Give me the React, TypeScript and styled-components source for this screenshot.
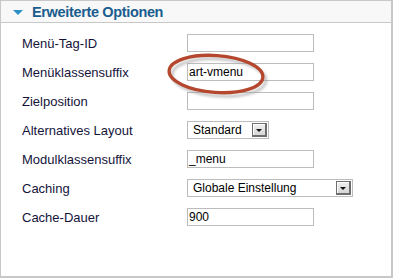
import React from "react";
import styled, { createGlobalStyle } from "styled-components";

const GlobalStyle = createGlobalStyle`
  html, body {
    margin: 0;
    padding: 0;
    background: #ffffff;
  }
  body {
    font-family: "Liberation Sans", Arial, sans-serif;
  }
`;

const fields: any[] = [
  { label: "Menü-Tag-ID", kind: "text", value: "" },
  { label: "Menüklassensuffix", kind: "text", value: "art-vmenu" },
  { label: "Zielposition", kind: "text", value: "" },
  { label: "Alternatives Layout", kind: "select", value: "Standard", width: 82 },
  { label: "Modulklassensuffix", kind: "text", value: "_menu" },
  { label: "Caching", kind: "select", value: "Globale Einstellung", width: 166 },
  { label: "Cache-Dauer", kind: "text", value: "900" },
];

const Panel = styled.section`
  position: relative;
  box-sizing: border-box;
  width: 393px;
  height: 278px;
  border: 1px solid #c8c8c8;
  border-right-width: 2px;
  border-bottom-width: 2px;
  background: #ffffff;
`;

const Header = styled.div`
  display: flex;
  align-items: center;
  gap: 9px;
  height: 21px;
  padding-left: 12px;
  background: #f8f8f8;
  border-bottom: 1px solid #c8c8c8;
`;

const Arrow = styled.span`
  width: 0;
  height: 0;
  border-left: 5px solid transparent;
  border-right: 5px solid transparent;
  border-top: 5px solid #2b8fc6;
  margin-top: 1px;
`;

const Title = styled.h3`
  margin: 0;
  font-size: 14.5px;
  font-weight: bold;
  color: #1b5d8f;
  letter-spacing: -0.35px;
`;

const Form = styled.div`
  display: grid;
  grid-template-columns: 165px auto;
  grid-auto-rows: 18px;
  row-gap: 11px;
  align-items: center;
  padding: 11px 0 0 21px;
`;

const Label = styled.label`
  font-size: 13px;
  color: #14143a;
  white-space: nowrap;
`;

const TextBox = styled.div`
  box-sizing: border-box;
  width: 127px;
  height: 18px;
  border: 1px solid #bcbcbc;
  padding: 0 1px;
  font-size: 12px;
  line-height: 16px;
  color: #000;
  background: #fff;
`;

const SelectBox = styled.div<{ $w: number }>`
  box-sizing: border-box;
  display: flex;
  align-items: center;
  justify-content: space-between;
  width: ${(p) => p.$w}px;
  height: 18px;
  border: 1px solid #bcbcbc;
  padding: 0 1px 0 5px;
  font-size: 12px;
  color: #000;
  background: #fff;
`;

const DropButton = styled.span`
  box-sizing: border-box;
  display: flex;
  align-items: center;
  justify-content: center;
  width: 15px;
  height: 14px;
  border: 1px solid #6e6e6e;
  border-right-width: 2px;
  border-bottom-width: 2px;
  box-shadow: inset 1px 1px 0 #ffffff;
  background: linear-gradient(#f0f0f0, #d6d6d6);

  &::after {
    content: "";
    width: 0;
    height: 0;
    border-left: 3.5px solid transparent;
    border-right: 3.5px solid transparent;
    border-top: 3.5px solid #111;
    margin-top: 1px;
  }
`;

const Marker = styled.svg`
  position: absolute;
  left: 160px;
  top: 48px;
  pointer-events: none;
`;

export default function App() {
  return (
    <>
      <GlobalStyle />
      <Panel>
        <Header>
          <Arrow />
          <Title>Erweiterte Optionen</Title>
        </Header>
        <Form>
          {fields.map((f, i) => (
            <React.Fragment key={i}>
              <Label>{f.label}</Label>
              {f.kind === "select" ? (
                <SelectBox $w={f.width}>
                  <span>{f.value}</span>
                  <DropButton />
                </SelectBox>
              ) : (
                <TextBox>{f.value}</TextBox>
              )}
            </React.Fragment>
          ))}
        </Form>
        <Marker width="115" height="54" viewBox="0 0 115 54">
          <defs>
            <filter id="soft" x="-20%" y="-40%" width="140%" height="180%">
              <feGaussianBlur stdDeviation="1.3" />
            </filter>
          </defs>
          <ellipse
            cx="58"
            cy="28.5"
            rx="47"
            ry="18.5"
            transform="rotate(4 58 28.5)"
            fill="none"
            stroke="#9a9a9a"
            strokeWidth="3"
            opacity="0.55"
            filter="url(#soft)"
          />
          <ellipse
            cx="55"
            cy="25"
            rx="47"
            ry="18.5"
            transform="rotate(4 55 25)"
            fill="none"
            stroke="#b4472e"
            strokeWidth="3.3"
          />
        </Marker>
      </Panel>
    </>
  );
}
